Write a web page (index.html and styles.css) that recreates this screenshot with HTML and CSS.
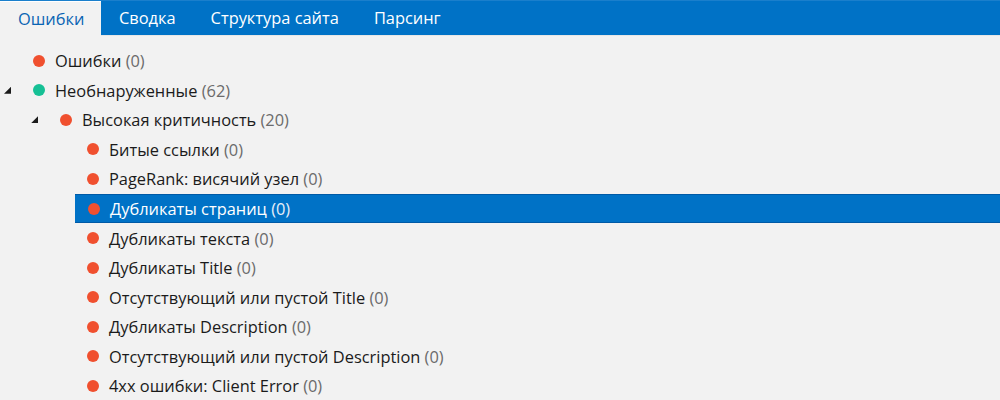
FILE: index.html
```html
<!DOCTYPE html>
<html lang="ru">
<head>
<meta charset="utf-8">
<link rel="stylesheet" href="styles.css">
</head>
<body>
<div class="app">
  <div class="tabs">
    <div class="tab active">Ошибки</div>
    <div class="tab">Сводка</div>
    <div class="tab">Структура сайта</div>
    <div class="tab">Парсинг</div>
  </div>
  <div class="tree">
    <div class="row l0"><span class="exp"></span><span class="dot red"></span><span class="label">Ошибки <span class="cnt">(0)</span></span></div>
    <div class="row l0"><span class="exp open"></span><span class="dot teal"></span><span class="label">Необнаруженные <span class="cnt">(62)</span></span></div>
    <div class="row l1"><span class="exp open"></span><span class="dot red"></span><span class="label">Высокая критичность <span class="cnt">(20)</span></span></div>
    <div class="row l2"><span class="exp"></span><span class="dot red"></span><span class="label">Битые ссылки <span class="cnt">(0)</span></span></div>
    <div class="row l2"><span class="exp"></span><span class="dot red"></span><span class="label">PageRank: висячий узел <span class="cnt">(0)</span></span></div>
    <div class="row l2 selected"><span class="exp"></span><span class="dot red"></span><span class="label">Дубликаты страниц <span class="cnt">(0)</span></span></div>
    <div class="row l2"><span class="exp"></span><span class="dot red"></span><span class="label">Дубликаты текста <span class="cnt">(0)</span></span></div>
    <div class="row l2"><span class="exp"></span><span class="dot red"></span><span class="label">Дубликаты Title <span class="cnt">(0)</span></span></div>
    <div class="row l2"><span class="exp"></span><span class="dot red"></span><span class="label">Отсутствующий или пустой Title <span class="cnt">(0)</span></span></div>
    <div class="row l2"><span class="exp"></span><span class="dot red"></span><span class="label">Дубликаты Description <span class="cnt">(0)</span></span></div>
    <div class="row l2"><span class="exp"></span><span class="dot red"></span><span class="label">Отсутствующий или пустой Description <span class="cnt">(0)</span></span></div>
    <div class="row l2"><span class="exp"></span><span class="dot red"></span><span class="label">4xx ошибки: Client Error <span class="cnt">(0)</span></span></div>
  </div>
</div>
</body>
</html>
```
FILE: styles.css
```css
html, body {
  margin: 0;
  padding: 0;
  background: #f2f2f2;
}
body {
  font-family: "Open Sans", "Noto Sans", sans-serif;
  width: 1000px;
  height: 400px;
  overflow: hidden;
}
.tabs {
  display: flex;
  background: #0072c6;
  height: 35px;
  border-bottom: 1px solid #e6e6e6;
  box-shadow: inset 0 1px 0 #1a7fcc;
}
.tab {
  color: #ffffff;
  font-size: 16.4px;
  padding: 0 17px 0 18px;
  line-height: 35px;
  height: 35px;
}
.tab.active {
  background: #f2f2f2;
  color: #0a64b4;
  margin-top: 1px;
  height: 35px;
  line-height: 34px;
  box-sizing: border-box;
  width: 101px;
  border-top: 1px solid #ffffff;
}
.tree {
  padding-top: 10px;
}
.row {
  display: flex;
  align-items: center;
  height: 29.55px;
  font-size: 16.4px;
  color: #1b1b1b;
  box-sizing: border-box;
}
.row.l0 { padding-left: 4px; }
.row.l1 { padding-left: 31px; }
.row.l2 { padding-left: 58px; }
.exp {
  width: 8px;
  height: 8px;
  margin-right: 21px;
}
.exp.open {
  background: #1b1b1b;
  clip-path: polygon(100% 0, 100% 100%, 0 100%);
  width: 7px;
  height: 7px;
  margin-right: 22px;
}
.dot {
  width: 12px;
  height: 12px;
  border-radius: 50%;
  margin-right: 10px;
  flex: none;
}
.dot.red { background: #f0502f; }
.dot.teal { background: #16c095; }
.cnt { color: #6b6b6b; }
.row.selected {
  background: #0072c6;
  border-top: 1px solid #005aa6;
  border-bottom: 1px solid #005aa6;
  color: #ffffff;
  margin-left: 75px;
  padding-left: 0;
}
.row.selected .exp { width: 0; margin-right: 13px; }
.row.selected .cnt { color: #e6eef8; }
```
